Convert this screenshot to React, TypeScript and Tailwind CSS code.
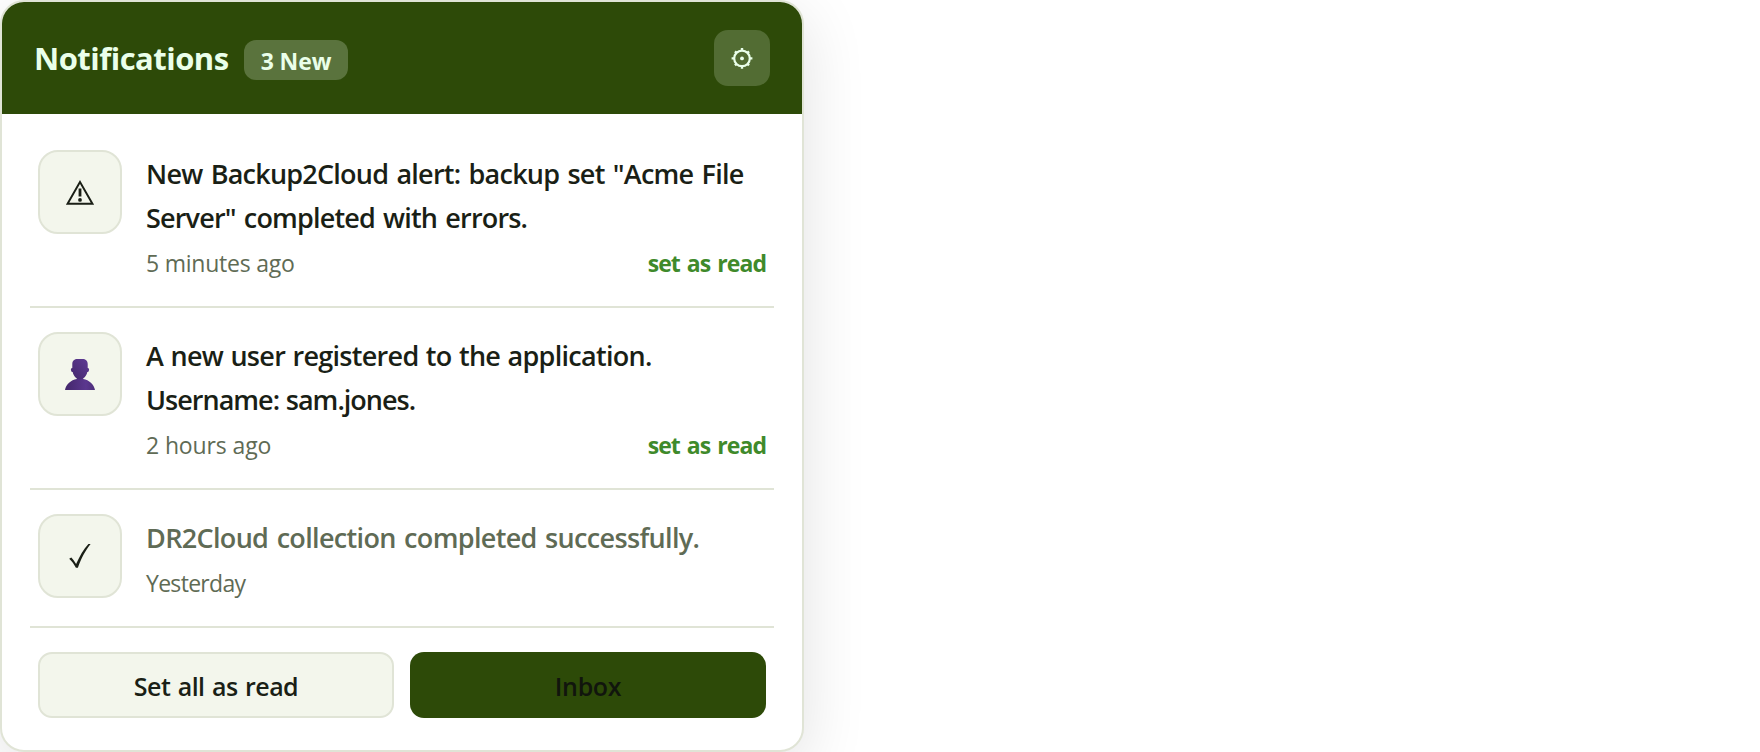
import type { ReactNode } from "react";

function GearIcon() {
  return (
    <svg className="size-6" viewBox="0 0 24 24" fill="none" stroke="#eaffea" aria-hidden="true">
      <circle cx="12" cy="12.400" r="7.800" strokeWidth="2.200" />
      <circle cx="12" cy="12.400" r="1.900" fill="#eaffea" stroke="none" />
      <path
        strokeWidth="2.400"
        d="M12 2v2.500M12 20.300v2.500M1.600 12.400h2.500M19.900 12.400h2.500M5 5.400l1.700 1.700M17.300 17.700l1.700 1.700M19 5.400l-1.700 1.700M6.700 17.700l-1.700 1.700"
      />
    </svg>
  );
}

function WarningIcon() {
  return (
    <svg className="mt-1 h-7 w-7" viewBox="0 0 28 28" fill="none" stroke="#1a1f16" aria-hidden="true">
      <path strokeWidth="1.900" d="M14 2L26.400 23.700H1.600z" />
      <path strokeWidth="2.800" d="M14 8.600v8" />
      <circle cx="14" cy="19.900" r="1.900" fill="#1a1f16" stroke="none" />
    </svg>
  );
}

function UserIcon() {
  return (
    <svg className="h-8 w-8" viewBox="0 0 32 32" aria-hidden="true">
      <defs>
        <linearGradient id="head" x1="0" y1="1" x2="1" y2="0">
          <stop offset="0" stopColor="#43276b" />
          <stop offset="1" stopColor="#5f3b96" />
        </linearGradient>
        <linearGradient id="body" x1="0" y1="0" x2="1" y2="0">
          <stop offset="0" stopColor="#43276b" />
          <stop offset="0.7" stopColor="#5b378f" />
          <stop offset="1" stopColor="#4c2e79" />
        </linearGradient>
      </defs>
      <path fill="url(#body)" d="M1 32C2 26.500 7 21.800 12.800 21V18h6.400v3C25 21.800 30 26.500 31 32z" />
      <path
        fill="url(#head)"
        d="M8.300 6C8.300 2.500 10.500 1 13.500 1h5C21.500 1 23.700 2.500 23.700 6v4c1.300 0 1.600 1 1.300 2.200-.3 1.200-.8 1.900-1.700 1.900C22.600 18 19.500 21.500 16 21.500S9.400 18 8.700 14.100c-.9 0-1.400-.7-1.700-1.900C6.700 11 7 10 8.300 10z"
      />
    </svg>
  );
}

function CheckIcon() {
  return (
    <svg className="h-7 w-7" viewBox="0 0 28 28" fill="#1a1f16" aria-hidden="true">
      <path d="M3.200 16.800l2.100-1.400c1.900 1.900 3.300 3.900 4.800 6.600C13.500 14.500 17.500 7 22.400 2h2.200C19.300 8.700 15.300 16 11.900 25.800H9.900C8 22.200 5.900 19.300 3.200 16.800z" />
    </svg>
  );
}

type Phrase = { text: string; spacing: string };

type ItemProps = {
  icon: ReactNode;
  lines: Phrase[];
  time: Phrase;
  unread?: boolean;
};

function NotificationItem({ icon, lines, time, unread = false }: ItemProps) {
  return (
    <li className="flex items-start gap-6 border-b-2 border-[#e0e4d6] px-2 py-6">
      <div className="flex size-[84px] shrink-0 items-center justify-center rounded-[20px] border-2 border-[#e0e4d6] bg-[#f3f6ec]">
        {icon}
      </div>
      <div className="min-w-0 flex-1 pt-0.5">
        <p className={`text-[27px] leading-[44px] font-semibold whitespace-nowrap ${unread ? "text-[#1a1f16]" : "text-[#5f6b55]"}`}>
          {lines.map((line) => (
            <span key={line.text} className={`block ${line.spacing}`}>
              {line.text}
            </span>
          ))}
        </p>
        <div className="flex h-[42px] items-center justify-between pt-1 text-[23px] leading-[38px]">
          <span className={`text-[#5f6b55] ${time.spacing}`}>{time.text}</span>
          {unread && (
            <button className="font-bold tracking-[-0.95px] text-[#3f8a2b] [word-spacing:2px]">set as read</button>
          )}
        </div>
      </div>
    </li>
  );
}

export default function App() {
  return (
    <main className="h-[752px] overflow-hidden bg-white font-['Open_Sans','Noto_Sans',sans-serif]">
      <section className="flex h-[752px] w-[804px] flex-col overflow-hidden rounded-3xl border-2 border-[#e0e4d6] bg-white shadow-[0_16px_64px_rgba(0,0,0,0.12)]">
        <header className="flex h-28 shrink-0 items-center justify-between bg-[#2d4a08] px-8">
          <div className="flex items-center gap-4 text-[#eaffea]">
            <h1 className="w-[194px] pt-px text-[31px] font-bold tracking-[-0.52px] whitespace-nowrap">Notifications</h1>
            <span className="mt-1 flex h-10 w-[104px] items-center justify-center rounded-xl bg-[#5a733d] pt-0.5 text-[23px] font-bold tracking-[-0.1px] whitespace-nowrap">
              3 New
            </span>
          </div>
          <button className="flex size-14 items-center justify-center rounded-[14px] bg-[#526c33]">
            <GearIcon />
          </button>
        </header>
        <div className="px-7 pt-3">
          <ul>
            <NotificationItem
              unread
              icon={<WarningIcon />}
              lines={[
                { text: 'New Backup2Cloud alert: backup set "Acme File', spacing: "tracking-[-0.77px] [word-spacing:2px]" },
                { text: 'Server" completed with errors.', spacing: "tracking-[-0.83px] [word-spacing:2px]" },
              ]}
              time={{ text: "5 minutes ago", spacing: "tracking-[-0.22px]" }}
            />
            <NotificationItem
              unread
              icon={<UserIcon />}
              lines={[
                { text: "A new user registered to the application.", spacing: "tracking-[-0.7px] [word-spacing:1px]" },
                { text: "Username: sam.jones.", spacing: "tracking-[-0.98px] [word-spacing:0.600px]" },
              ]}
              time={{ text: "2 hours ago", spacing: "tracking-[-0.12px]" }}
            />
            <NotificationItem
              icon={<CheckIcon />}
              lines={[
                { text: "DR2Cloud collection completed successfully.", spacing: "tracking-[-0.66px] [word-spacing:2px]" },
              ]}
              time={{ text: "Yesterday", spacing: "tracking-[-0.7px]" }}
            />
          </ul>
          <div className="grid grid-cols-2 gap-4 px-2 pt-6 text-[25px] font-semibold">
            <button className="h-[66px] rounded-[14px] border-2 border-[#e0e4d6] bg-[#f3f6ec] pt-1 tracking-[-0.54px] text-[#1a1f16] [word-spacing:1.500px]">
              Set all as read
            </button>
            <button className="h-[66px] rounded-[14px] bg-[#2d4a08] pt-1 tracking-[-0.36px] text-[#11150d]">Inbox</button>
          </div>
        </div>
      </section>
    </main>
  );
}
